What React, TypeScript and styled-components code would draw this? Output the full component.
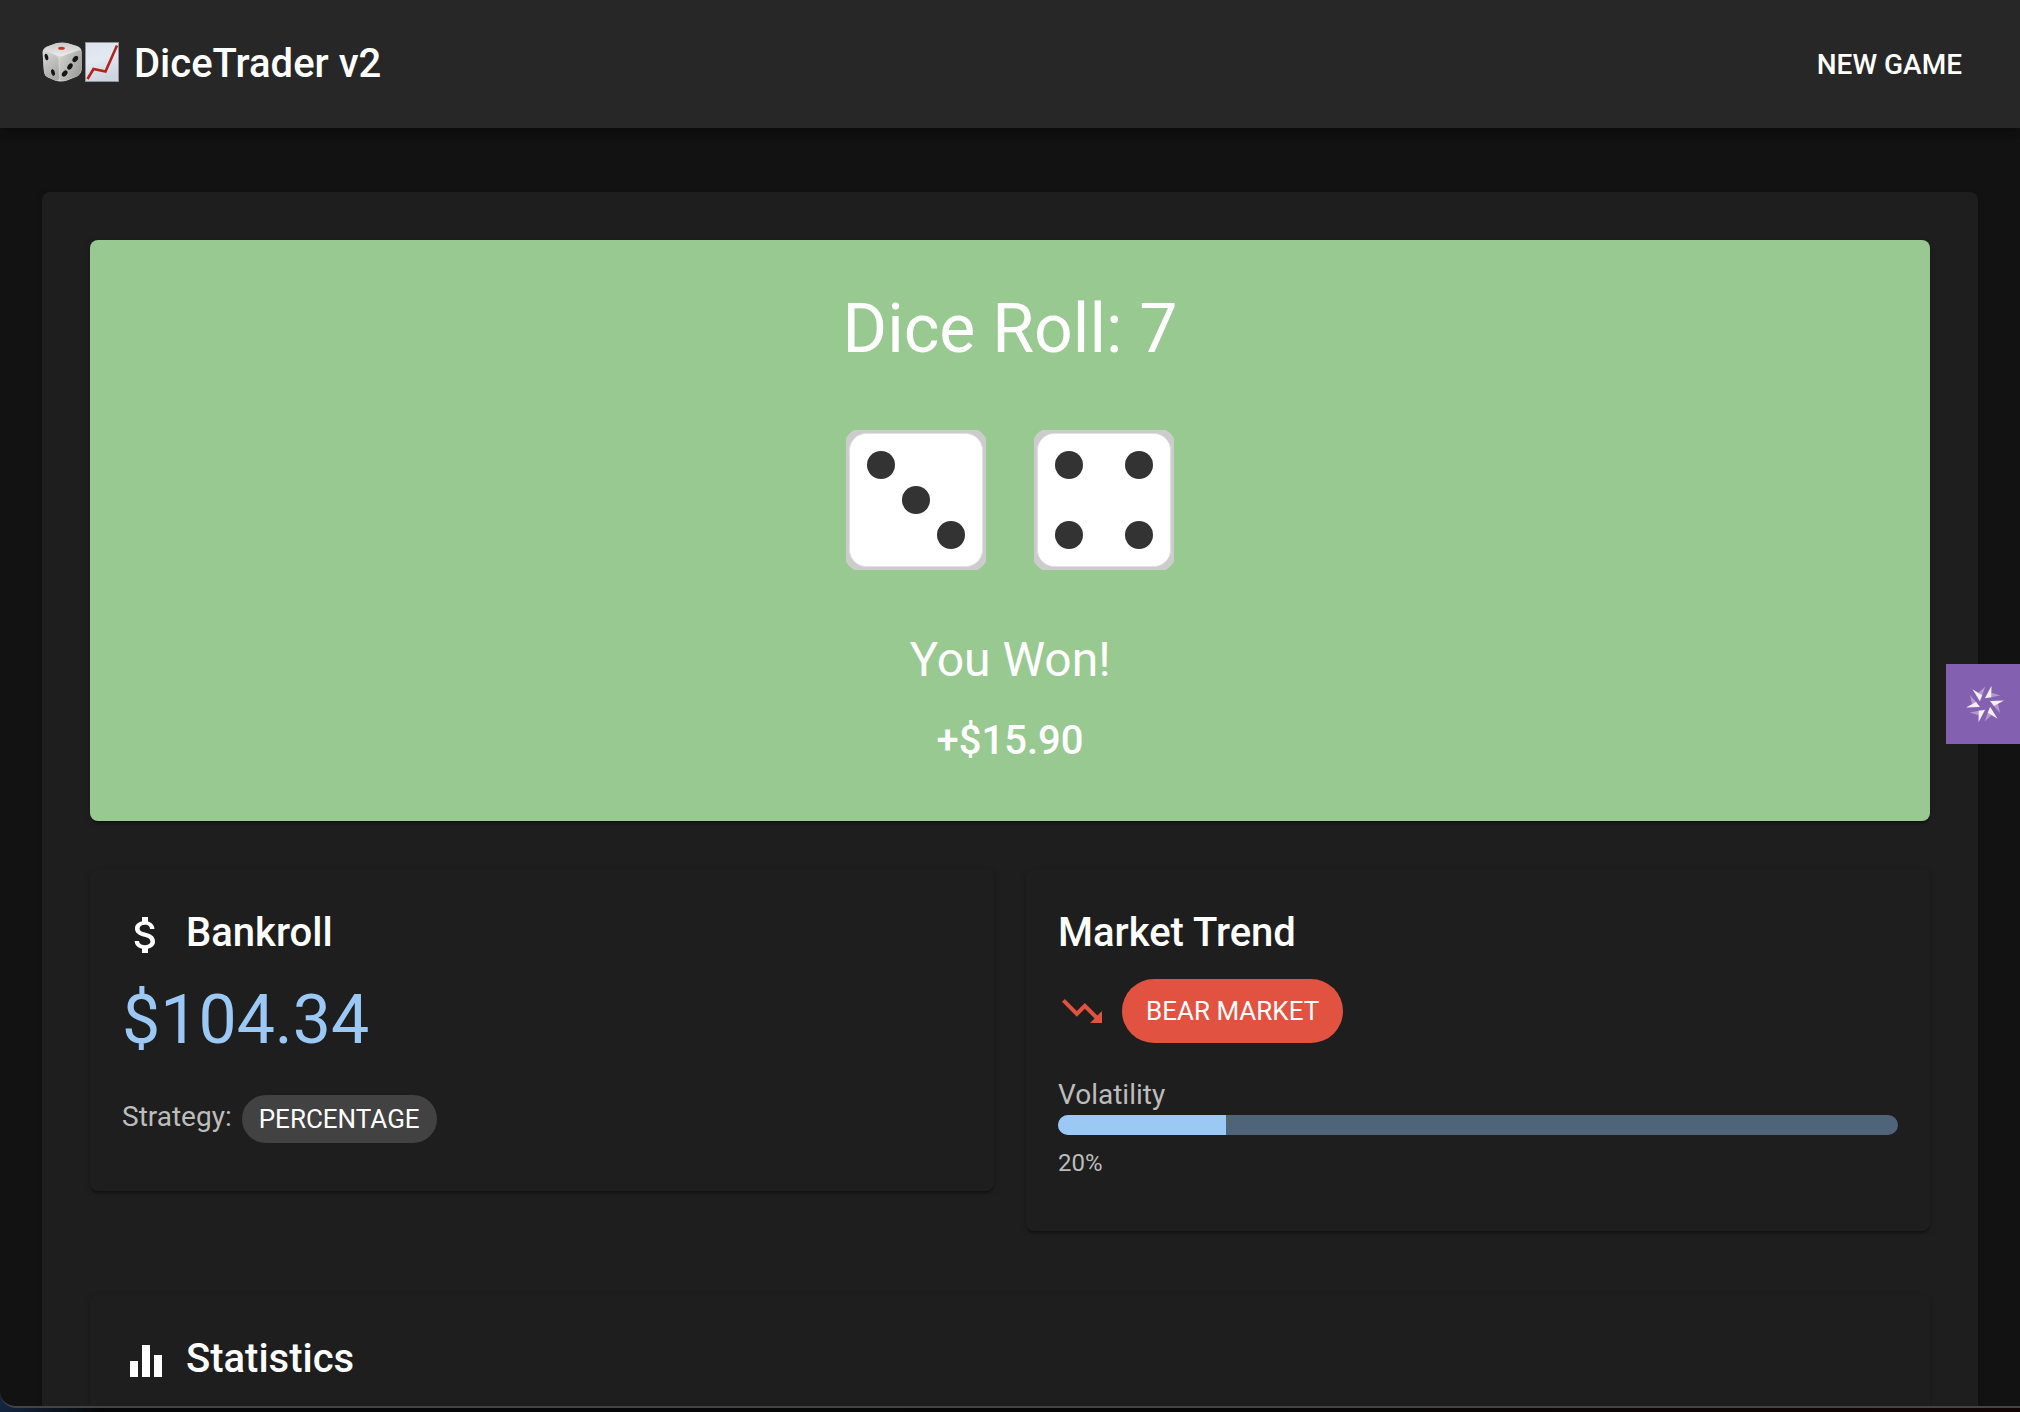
import React from "react";
import styled, { createGlobalStyle } from "styled-components";

const GlobalStyle = createGlobalStyle`
  *, *::before, *::after { box-sizing: border-box; }
  html, body { margin: 0; background: #03050a; }
  body {
    font-family: Roboto, "Liberation Sans", sans-serif;
    color: #fff;
    overflow: hidden;
    -webkit-font-smoothing: antialiased;
  }
  h1, h2, h3, p { margin: 0; }
`;

const Desktop = styled.div`
  height: 100vh;
  padding-bottom: 4px;
  background: linear-gradient(90deg, #14253f 0, #050608 100px, #050505 60%, #120404 100%);
`;

const Window = styled.div`
  height: 100%;
  overflow: hidden;
  background: #121212;
  border-bottom: 2px solid #444;
  border-bottom-left-radius: 16px;
`;

const AppBar = styled.header`
  display: flex;
  align-items: center;
  justify-content: space-between;
  height: 128px;
  padding: 0 42px;
  background: #272727;
  box-shadow: 0 4px 8px -2px rgba(0, 0, 0, 0.2), 0 4px 10px rgba(0, 0, 0, 0.14),
    0 2px 10px rgba(0, 0, 0, 0.12);
`;

const Brand = styled.h1`
  display: flex;
  align-items: center;
  font-size: 40px;
  font-weight: 500;
  line-height: 64px;
`;

const BrandIcons = styled.span`
  display: flex;
  gap: 2px;
  margin-right: 14px;
  padding-bottom: 4px;
`;

const TextButton = styled.button`
  padding: 14px 16px 12px;
  border: 0;
  border-radius: 8px;
  background: transparent;
  color: inherit;
  font: 500 28px/48px Roboto, "Liberation Sans", sans-serif;
  text-transform: uppercase;
  cursor: pointer;
`;

const Page = styled.main`
  padding: 64px 42px;
`;

const Paper = styled.section`
  border-radius: 8px;
  background: #1e1e1e;
  box-shadow: 0 4px 2px -2px rgba(0, 0, 0, 0.2), 0 2px 2px rgba(0, 0, 0, 0.14),
    0 2px 6px rgba(0, 0, 0, 0.12);
`;

const Board = styled(Paper)`
  padding: 48px;
`;

const Card = styled(Paper)`
  padding: 32px 32px 48px;
`;

const Result = styled(Paper)`
  display: flex;
  flex-direction: column;
  align-items: center;
  padding: 48px;
  background: #98c991;
`;

const Display = styled.p<{ $tone?: string }>`
  font-size: 68px;
  line-height: 82px;
  color: ${({ $tone }) => $tone ?? "inherit"};
`;

const Dice = styled.div`
  display: flex;
  gap: 48px;
  margin: 60px 0 58px;
`;

const Outcome = styled.p`
  margin-bottom: 17px;
  font-size: 48px;
  line-height: 64px;
`;

const Title = styled.h2`
  font-size: 40px;
  font-weight: 500;
  line-height: 64px;

  svg {
    margin-right: 16px;
    vertical-align: middle;
  }
`;

const Panels = styled.div`
  display: grid;
  grid-template-columns: 1fr 1fr;
  align-items: start;
  gap: 32px;
  margin: 48px 0 64px;
`;

const PanelBody = styled.div`
  margin-top: 14px;
`;

const Row = styled.div<{ $gap: number; $align: string }>`
  display: flex;
  align-items: ${({ $align }) => $align};
  gap: ${({ $gap }) => $gap}px;
`;

const StrategyRow = styled(Row)`
  margin-top: 34px;
`;

const Label = styled.label`
  display: block;
  font-size: 28px;
  line-height: 40px;
  color: #bcbcbc;
`;

const StrategyLabel = styled.span`
  font-size: 28px;
  line-height: 44px;
  color: #bcbcbc;
`;

const Chip = styled.span<{ $tone: string; $large?: boolean }>`
  padding: 0 ${({ $large }) => ($large ? 24 : 17)}px;
  border-radius: 32px;
  background: ${({ $tone }) => $tone};
  font-size: 26px;
  line-height: ${({ $large }) => ($large ? 64 : 48)}px;
`;

const Volatility = styled.div`
  margin-top: 32px;
`;

const Meter = styled.progress`
  display: block;
  width: 100%;
  height: 20px;
  margin-bottom: 8px;
  border: 0;
  border-radius: 10px;
  overflow: hidden;
  appearance: none;
  background: #4f6479;

  &::-webkit-progress-bar { background: #4f6479; }
  &::-webkit-progress-value { background: #9bc8f5; }
`;

const Caption = styled.p`
  font-size: 24px;
  line-height: 40px;
  color: #bcbcbc;
`;

const SideTab = styled.button`
  position: fixed;
  top: 664px;
  right: 0;
  display: flex;
  align-items: center;
  width: 74px;
  height: 80px;
  padding: 0 0 0 18px;
  border: 0;
  background: #8360b0;
  cursor: pointer;
`;

const ICONS = {
  dollar:
    "M11.8 10.9c-2.27-.59-3-1.2-3-2.15 0-1.09 1.01-1.85 2.7-1.85 1.78 0 2.44.85 2.5 2.1h2.21c-.07-1.72-1.12-3.3-3.21-3.81V3h-3v2.16c-1.94.42-3.5 1.68-3.5 3.61 0 2.31 1.91 3.46 4.7 4.13 2.5.6 3 1.48 3 2.41 0 .69-.49 1.79-2.7 1.79-2.06 0-2.87-.92-2.98-2.1h-2.2c.12 2.19 1.76 3.42 3.68 3.83V21h3v-2.15c1.95-.37 3.5-1.5 3.5-3.55 0-2.84-2.43-3.81-4.7-4.4z",
  trendingDown:
    "M16 18l2.29-2.29-4.88-4.88-4 4L2 7.41 3.41 6l6 6 4-4 6.3 6.29L22 12v6z",
  bars: "M10 20h4V4h-4v16zm-6 0h4v-8H4v8zM16 9v11h4V9h-4z",
};

function Icon({ name, fill = "#fff" }: { name: keyof typeof ICONS; fill?: string }) {
  return (
    <svg width="48" height="48" viewBox="0 0 24 24" fill={fill} aria-hidden="true">
      <path d={ICONS[name]} />
    </svg>
  );
}

function DieLogo() {
  return (
    <svg width="40" height="40" viewBox="0 0 40 40" aria-hidden="true">
      <defs>
        <linearGradient id="dieTop" x1="0" y1="0" x2="0" y2="1">
          <stop offset="0" stopColor="#c9c9c9" />
          <stop offset="1" stopColor="#ececec" />
        </linearGradient>
        <linearGradient id="dieLeft" x1="0" y1="0" x2="0.4" y2="1">
          <stop offset="0" stopColor="#d9d9d8" />
          <stop offset="1" stopColor="#a9a9a8" />
        </linearGradient>
        <linearGradient id="dieRight" x1="0" y1="0" x2="1" y2="0.6">
          <stop offset="0" stopColor="#d2d3d2" />
          <stop offset="1" stopColor="#a0a19f" />
        </linearGradient>
      </defs>
      <path d="M0.5 10Q1 6 5 4.500L14 1.300Q20-0.200 26 1.300L35 4Q39.500 5.500 39.700 10V27Q39.500 32 35 34.500L25 38.500Q19 40.500 13 38.500L6 35.500Q2.500 34 1.800 29Z" fill="#d6d6d5" />
      <path d="M2.500 7.500Q3 5.500 6 4.500L14 1.600Q20 0.200 26 1.600L35 4.300Q38 5.500 37.500 7.500L22 13.500Q17.500 15 13.500 13Z" fill="url(#dieTop)" />
      <path d="M1 9.500Q1 7.500 3 8.500L13.500 13.500Q16.500 15 16.600 18.500L17 36Q17 39.500 13.500 38.500L6 35.300Q2.700 33.500 2 29Z" fill="url(#dieLeft)" />
      <path d="M17.500 18Q18 15.500 21.500 14L36.500 8.500Q39.300 7.500 39.300 11V27Q39 31.500 35 34L25 38Q17.500 40 17.300 36Z" fill="url(#dieRight)" />
      <ellipse cx="19.500" cy="6.200" rx="3.300" ry="1.500" fill="#cf2d20" />
      <g fill="#151515">
        <ellipse cx="4.500" cy="15" rx="1.700" ry="3.300" transform="rotate(-14 4.500 15)" />
        <ellipse cx="11" cy="30.500" rx="1.800" ry="3.300" transform="rotate(-14 11 30.500)" />
        <ellipse cx="33.300" cy="17" rx="2.300" ry="3.500" transform="rotate(38 33.300 17)" />
        <ellipse cx="28" cy="24.500" rx="2.300" ry="3.500" transform="rotate(32 28 24.500)" />
        <ellipse cx="22.700" cy="31.500" rx="2.300" ry="3.500" transform="rotate(38 22.700 31.500)" />
      </g>
    </svg>
  );
}

function ChartLogo() {
  return (
    <svg width="36" height="40" viewBox="0 0 36 40" aria-hidden="true">
      <defs>
        <linearGradient id="sheet" x1="0" y1="0" x2="0.3" y2="1">
          <stop offset="0" stopColor="#dce3ed" />
          <stop offset="0.5" stopColor="#e2e9f2" />
          <stop offset="1" stopColor="#cfd6e0" />
        </linearGradient>
      </defs>
      <rect x="1.500" y="0.500" width="33" height="39" fill="url(#sheet)" stroke="#8f949b" />
      <path d="M3.500 37L9.500 27L21.500 29.500L33 3.500" fill="none" stroke="#b3231d" strokeWidth="2.600" />
    </svg>
  );
}

const PIPS: Record<number, [number, number][]> = {
  3: [[25, 25], [50, 50], [75, 75]],
  4: [[25, 25], [75, 25], [25, 75], [75, 75]],
};

function Die({ value }: { value: 3 | 4 }) {
  return (
    <svg width="140" height="140" viewBox="0 0 100 100" role="img" aria-label={`Die showing ${value}`}>
      <path d="M6 0H94Q98 2 100 6V94Q98 98 94 100H6Q2 98 0 94V6Q2 2 6 0Z" fill="#ccc" />
      <rect x="2.500" y="2.500" width="95" height="95" rx="12" fill="#fff" stroke="#e0e0e0" strokeWidth="0.700" />
      {PIPS[value].map(([x, y]) => (
        <circle key={`${x}-${y}`} cx={x} cy={y} r="10" fill="#333" />
      ))}
    </svg>
  );
}

function Burst() {
  return (
    <svg width="42" height="42" viewBox="-21 -21 42 42" aria-hidden="true">
      {[0, 60, 120, 180, 240, 300].map((angle) => (
        <g key={angle} transform={`rotate(${angle})`}>
          <path d="M8 1L15 9L13 0Z" fill="#b59ad0" />
          <path d="M5-3L19-3.500L9 2Z" fill="#f3f0ee" />
        </g>
      ))}
    </svg>
  );
}

export default function App() {
  return (
    <Desktop>
      <GlobalStyle />
      <Window>
        <AppBar>
          <Brand>
            <BrandIcons>
              <DieLogo />
              <ChartLogo />
            </BrandIcons>
            DiceTrader v2
          </Brand>
          <TextButton type="button">New Game</TextButton>
        </AppBar>
        <Page>
          <Board>
            <Result>
              <Display>Dice Roll: 7</Display>
              <Dice>
                <Die value={3} />
                <Die value={4} />
              </Dice>
              <Outcome>You Won!</Outcome>
              <Title as="p">+$15.90</Title>
            </Result>
            <Panels>
              <Card>
                <Title><Icon name="dollar" />Bankroll</Title>
                <PanelBody>
                  <Display $tone="#9bc8f5">$104.34</Display>
                  <StrategyRow $gap={10} $align="flex-start">
                    <StrategyLabel>Strategy:</StrategyLabel>
                    <Chip $tone="#424242">PERCENTAGE</Chip>
                  </StrategyRow>
                </PanelBody>
              </Card>
              <Card>
                <Title>Market Trend</Title>
                <PanelBody>
                  <Row $gap={16} $align="center">
                    <Icon name="trendingDown" fill="#e15241" />
                    <Chip $tone="#e15241" $large>BEAR MARKET</Chip>
                  </Row>
                  <Volatility>
                    <Label htmlFor="volatility">Volatility</Label>
                    <Meter id="volatility" value={20} max={100} />
                    <Caption>20%</Caption>
                  </Volatility>
                </PanelBody>
              </Card>
            </Panels>
            <Card>
              <Title><Icon name="bars" />Statistics</Title>
            </Card>
          </Board>
        </Page>
      </Window>
      <SideTab type="button" aria-label="Open assistant">
        <Burst />
      </SideTab>
    </Desktop>
  );
}
